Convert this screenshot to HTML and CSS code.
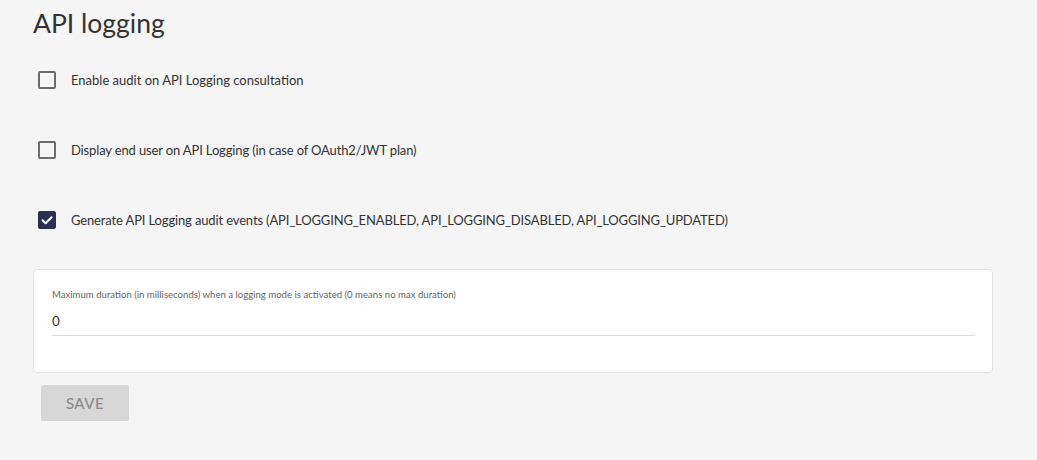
FILE: index.html
```html
<!DOCTYPE html>
<html>
<head>
<meta charset="utf-8">
<link rel="stylesheet" href="styles.css">
</head>
<body>
<div class="page">
  <h1 class="title">API logging</h1>
  <div class="options">
    <label class="check-row">
      <span class="box"></span>
      <span class="check-label">Enable audit on API Logging consultation</span>
    </label>
    <label class="check-row">
      <span class="box"></span>
      <span class="check-label tight">Display end user on API Logging (in case of OAuth2/JWT plan)</span>
    </label>
    <label class="check-row">
      <span class="box checked">
        <svg viewBox="0 0 18 18" width="18" height="18"><path d="M4.5 9.2 L7.6 12.2 L13.6 6.2" fill="none" stroke="#fff" stroke-width="2" stroke-linecap="round" stroke-linejoin="round"/></svg>
      </span>
      <span class="check-label tight">Generate API Logging audit events (API_LOGGING_ENABLED, API_LOGGING_DISABLED, API_LOGGING_UPDATED)</span>
    </label>
  </div>
  <div class="card">
    <div class="field">
      <div class="field-label">Maximum duration (in milliseconds) when a logging mode is activated (0 means no max duration)</div>
      <div class="field-input">0</div>
    </div>
  </div>
  <div class="actions">
    <button class="save">SAVE</button>
  </div>
</div>
</body>
</html>
```
FILE: styles.css
```css
html, body {
  margin: 0;
  padding: 0;
  background: #f5f5f5;
}
body {
  font-family: Lato, "Open Sans", "Liberation Sans", sans-serif;
  color: #333;
}
.page {
  padding: 0 44px 0 33px;
  height: 460px;
  box-sizing: border-box;
}
.title {
  margin: 0;
  padding-top: 8px;
  font-size: 26.5px;
  font-weight: 400;
  line-height: 30px;
  color: #333;
}
.options {
  display: flex;
  flex-direction: column;
  gap: 52px;
  margin-top: 33px;
  padding-left: 5px;
}
.check-row {
  display: flex;
  align-items: center;
  gap: 15px;
  height: 18px;
}
.box {
  width: 18px;
  height: 18px;
  box-sizing: border-box;
  border: 2px solid #6b6b6b;
  border-radius: 2px;
  display: flex;
  align-items: center;
  justify-content: center;
  flex: none;
}
.box.checked {
  background: #2c2e52;
  border-color: #2c2e52;
}
.box svg {
  display: block;
  margin: -2px;
}
.check-label {
  font-size: 13px;
  color: #333;
}
.check-label.tight {
  letter-spacing: -0.14px;
}
.card {
  margin-top: 40px;
  background: #fff;
  border: 1px solid #e2e2e2;
  border-radius: 4px;
  padding: 19px 17px 36px 18px;
  height: 104px;
  box-sizing: border-box;
}
.field-label {
  font-size: 9.6px;
  color: #666;
  line-height: 12px;
}
.field-input {
  margin-top: 12px;
  font-size: 13.5px;
  color: #333;
  line-height: 16px;
  padding-bottom: 6px;
  border-bottom: 1px solid #dcdcdc;
}
.actions {
  margin-top: 12px;
  padding-left: 8px;
}
.save {
  width: 88px;
  height: 36px;
  border: none;
  border-radius: 2px;
  background: #d7d7d7;
  color: #8a8a8a;
  font-family: inherit;
  font-size: 15px;
  letter-spacing: 0.5px;
  font-weight: 500;
  padding: 0;
}
```
